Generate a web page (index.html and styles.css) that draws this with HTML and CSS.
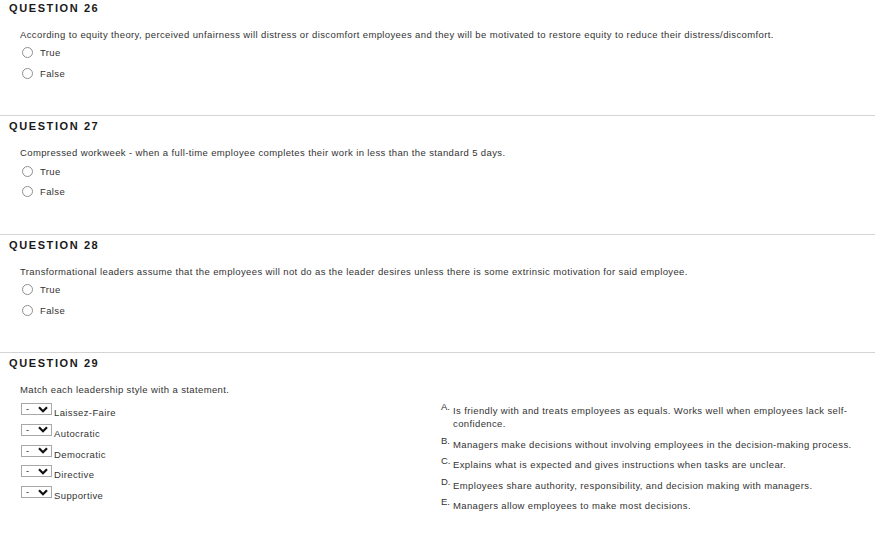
FILE: index.html
```html
<!DOCTYPE html>
<html>
<head>
<meta charset="utf-8">
<link rel="stylesheet" href="styles.css">
</head>
<body>
<div class="page">
  <section class="question first">
    <h2 class="qhead">QUESTION 26</h2>
    <p class="qtext">According to equity theory, perceived unfairness will distress or discomfort employees and they will be motivated to restore equity to reduce their distress/discomfort.</p>
    <div class="options">
      <label class="opt"><span class="radio"></span>True</label>
      <label class="opt"><span class="radio"></span>False</label>
    </div>
  </section>
  <section class="question">
    <h2 class="qhead">QUESTION 27</h2>
    <p class="qtext">Compressed workweek - when a full-time employee completes their work in less than the standard 5 days.</p>
    <div class="options">
      <label class="opt"><span class="radio"></span>True</label>
      <label class="opt"><span class="radio"></span>False</label>
    </div>
  </section>
  <section class="question">
    <h2 class="qhead">QUESTION 28</h2>
    <p class="qtext">Transformational leaders assume that the employees will not do as the leader desires unless there is some extrinsic motivation for said employee.</p>
    <div class="options">
      <label class="opt"><span class="radio"></span>True</label>
      <label class="opt"><span class="radio"></span>False</label>
    </div>
  </section>
  <section class="question last">
    <h2 class="qhead">QUESTION 29</h2>
    <p class="qtext">Match each leadership style with a statement.</p>
    <div class="match">
      <div class="left">
        <div class="mrow"><span class="sel"><span class="dash">-</span><svg class="chev" width="10" height="7" viewBox="0 0 10 7"><path d="M1 1.2 L5 5.2 L9 1.2" fill="none" stroke="#111" stroke-width="2.2"/></svg></span><span class="mlabel">Laissez-Faire</span></div>
        <div class="mrow"><span class="sel"><span class="dash">-</span><svg class="chev" width="10" height="7" viewBox="0 0 10 7"><path d="M1 1.2 L5 5.2 L9 1.2" fill="none" stroke="#111" stroke-width="2.2"/></svg></span><span class="mlabel">Autocratic</span></div>
        <div class="mrow"><span class="sel"><span class="dash">-</span><svg class="chev" width="10" height="7" viewBox="0 0 10 7"><path d="M1 1.2 L5 5.2 L9 1.2" fill="none" stroke="#111" stroke-width="2.2"/></svg></span><span class="mlabel">Democratic</span></div>
        <div class="mrow"><span class="sel"><span class="dash">-</span><svg class="chev" width="10" height="7" viewBox="0 0 10 7"><path d="M1 1.2 L5 5.2 L9 1.2" fill="none" stroke="#111" stroke-width="2.2"/></svg></span><span class="mlabel">Directive</span></div>
        <div class="mrow"><span class="sel"><span class="dash">-</span><svg class="chev" width="10" height="7" viewBox="0 0 10 7"><path d="M1 1.2 L5 5.2 L9 1.2" fill="none" stroke="#111" stroke-width="2.2"/></svg></span><span class="mlabel">Supportive</span></div>
      </div>
      <ol class="right">
        <li class="ans"><span class="letter">A.</span><span class="atext">Is friendly with and treats employees as equals. Works well when employees lack self-confidence.</span></li>
        <li class="ans"><span class="letter">B.</span><span class="atext">Managers make decisions without involving employees in the decision-making process.</span></li>
        <li class="ans"><span class="letter">C.</span><span class="atext">Explains what is expected and gives instructions when tasks are unclear.</span></li>
        <li class="ans"><span class="letter">D.</span><span class="atext">Employees share authority, responsibility, and decision making with managers.</span></li>
        <li class="ans"><span class="letter">E.</span><span class="atext">Managers allow employees to make most decisions.</span></li>
      </ol>
    </div>
  </section>
</div>
</body>
</html>
```

FILE: styles.css
```css
html, body {
  margin: 0;
  padding: 0;
  background: #ffffff;
}
body {
  font-family: "Liberation Sans", Arial, sans-serif;
  color: #333333;
  overflow: hidden;
}
.page {
  margin-top: -3.5px;
}
.question {
  box-sizing: border-box;
  height: 118.5px;
  border-top: 1px solid #d4d4d4;
  padding-top: 3px;
}
.question.last {
  height: auto;
}
.qhead {
  margin: 0 0 0 9px;
  font-size: 11px;
  line-height: 14px;
  font-weight: bold;
  letter-spacing: 1.6px;
  color: #1a1a1a;
}
.qtext {
  margin: 13px 0 0 20px;
  font-size: 9.5px;
  line-height: 14px;
  letter-spacing: 0.38px;
}
.options {
  margin: 1px 0 0 21px;
}
.opt {
  display: flex;
  align-items: center;
  height: 20.5px;
  font-size: 9.5px;
  letter-spacing: 0.38px;
}
.radio {
  box-sizing: border-box;
  width: 11px;
  height: 11px;
  border: 1px solid #8f8f8f;
  border-radius: 50%;
  background: #fff;
  margin-right: 7px;
  margin-left: 1px;
}
.match {
  display: grid;
  grid-template-columns: 441px 420px;
  margin-top: 5px;
}
.left {
  padding-left: 21px;
}
.mrow {
  display: flex;
  align-items: flex-start;
  height: 20.75px;
}
.sel {
  box-sizing: border-box;
  display: flex;
  align-items: center;
  justify-content: space-between;
  width: 31px;
  height: 12px;
  margin-top: 1px;
  border: 1px solid #a8a8a8;
  background: #fff;
  padding: 0 3px 0 4px;
  font-size: 9px;
  color: #222;
}
.dash {
  line-height: 10px;
}
.chev {
  display: block;
}
.mlabel {
  font-size: 9.5px;
  line-height: 12px;
  padding-top: 5px;
  margin-left: 2px;
  letter-spacing: 0.38px;
}
.right {
  list-style: none;
  margin: 0;
  padding: 0;
}
.ans {
  display: flex;
  font-size: 9.5px;
  line-height: 13px;
  margin-bottom: 7.5px;
  letter-spacing: 0.38px;
}
.ans:first-child {
  margin-top: 2px;
}
.letter {
  width: 12px;
  flex: none;
  position: relative;
  top: -4px;
  letter-spacing: 0;
}
.atext {
  flex: 1;
}
```
